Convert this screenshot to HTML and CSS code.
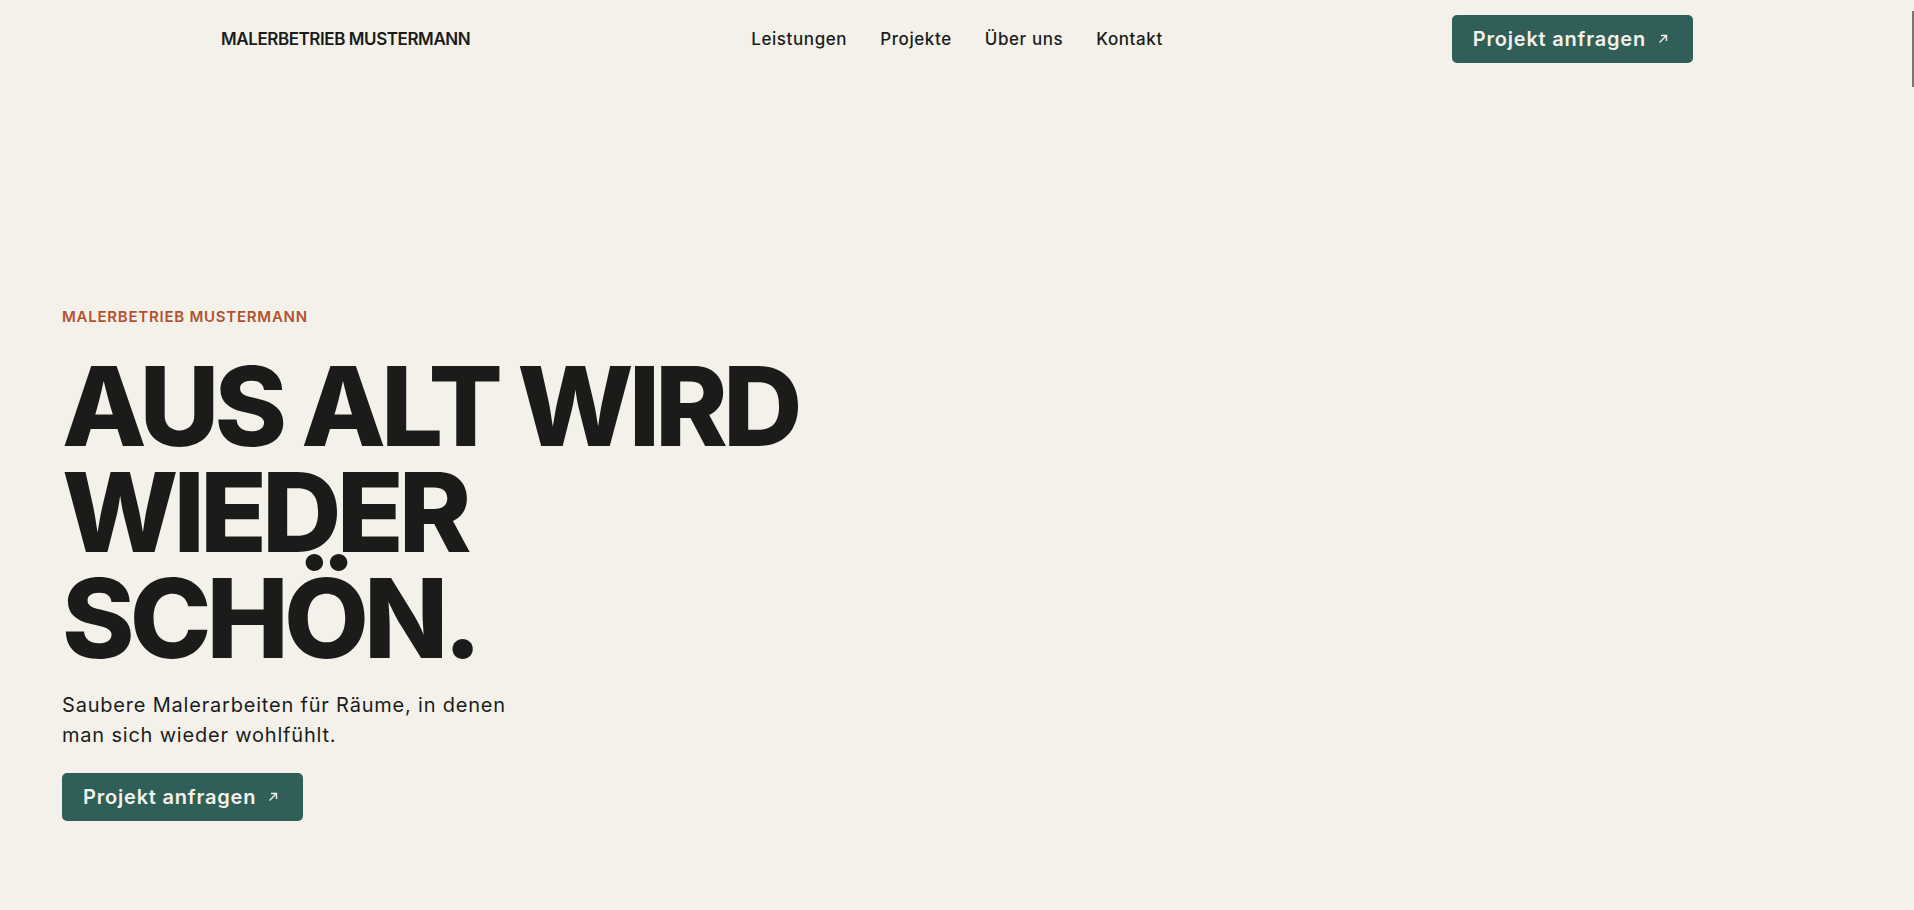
FILE: index.html
```html
<!doctype html>
<html lang="de">
<head>
<meta charset="UTF-8">
<title>Malerbetrieb Mustermann</title>
<link rel="stylesheet" href="styles.css">
</head>
<body>

<!-- Kopfzeile -->
<header class="topbar">
	<a class="brand" href="#">MALERBETRIEB MUSTERMANN</a>
	<nav class="nav">
		<a href="#leistungen">Leistungen</a>
		<a href="#projekte">Projekte</a>
		<a href="#ueber-uns">Über uns</a>
		<a href="#kontakt">Kontakt</a>
	</nav>
	<div class="topbar-cta">
		<a class="btn" href="#kontakt">Projekt anfragen
			<svg class="btn-arrow" viewBox="0 0 10 10" width="10" height="10"><path d="M1.5 8.5 L8.5 1.5 M3 1.5 H8.5 V7" fill="none" stroke="currentColor" stroke-width="1.4"/></svg>
		</a>
	</div>
</header>

<!-- Startbereich -->
<main class="hero">
	<p class="eyebrow">MALERBETRIEB MUSTERMANN</p>
	<h1 class="hero-title">AUS ALT WIRD<br>WIEDER<br>SCHÖN.</h1>
	<p class="hero-text">Saubere Malerarbeiten für Räume, in denen man sich wieder wohlfühlt.</p>
	<a class="btn" href="#kontakt">Projekt anfragen
		<svg class="btn-arrow" viewBox="0 0 10 10" width="10" height="10"><path d="M1.5 8.5 L8.5 1.5 M3 1.5 H8.5 V7" fill="none" stroke="currentColor" stroke-width="1.4"/></svg>
	</a>
</main>

<div class="scroll-mark"></div>

</body>
</html>
```

FILE: styles.css
```css
* {
	box-sizing: border-box;
}

html, body {
	margin: 0;
	padding: 0;
}

body {
	background: #f3f1ea;
	color: #1b1c1a;
	font-family: "Inter", "Noto Sans", sans-serif;
	min-height: 910px;
	overflow: hidden;
}

a {
	color: inherit;
	text-decoration: none;
}

/* Kopfzeile */
.topbar {
	max-width: 1472px;
	height: 78px;
	margin: 0 auto;
	display: grid;
	grid-template-columns: 1fr auto 1fr;
	align-items: center;
}

.brand {
	font-size: 17px;
	font-weight: 600;
	letter-spacing: -0.025em;
}

.nav {
	display: flex;
	gap: 33px;
	font-size: 17px;
	font-weight: 500;
	letter-spacing: 0.035em;
}

.topbar-cta {
	display: flex;
	justify-content: flex-end;
}

/* Button */
.btn {
	display: inline-flex;
	align-items: center;
	gap: 12px;
	height: 48px;
	padding: 0 25px 0 21px;
	background: #2f5f58;
	color: #f3f1ea;
	border-radius: 5px;
	font-size: 20px;
	font-weight: 600;
	letter-spacing: 0.04em;
}

.btn-arrow {
	flex: none;
}

/* Startbereich */
.hero {
	padding: 229px 62px 0;
}

.eyebrow {
	margin: 0;
	color: #b1532f;
	font-size: 15px;
	font-weight: 600;
	letter-spacing: 0.05em;
}

.hero-title {
	margin: 27px 0 0;
	font-size: 110px;
	line-height: 106px;
	font-weight: 800;
	letter-spacing: -0.045em;
}

.hero-text {
	max-width: 456px;
	margin: 19px 0 23px;
	font-size: 20px;
	line-height: 30px;
	letter-spacing: 0.04em;
}

.scroll-mark {
	position: fixed;
	top: 11px;
	right: 0;
	width: 2px;
	height: 76px;
	background: #77776f;
}
```
